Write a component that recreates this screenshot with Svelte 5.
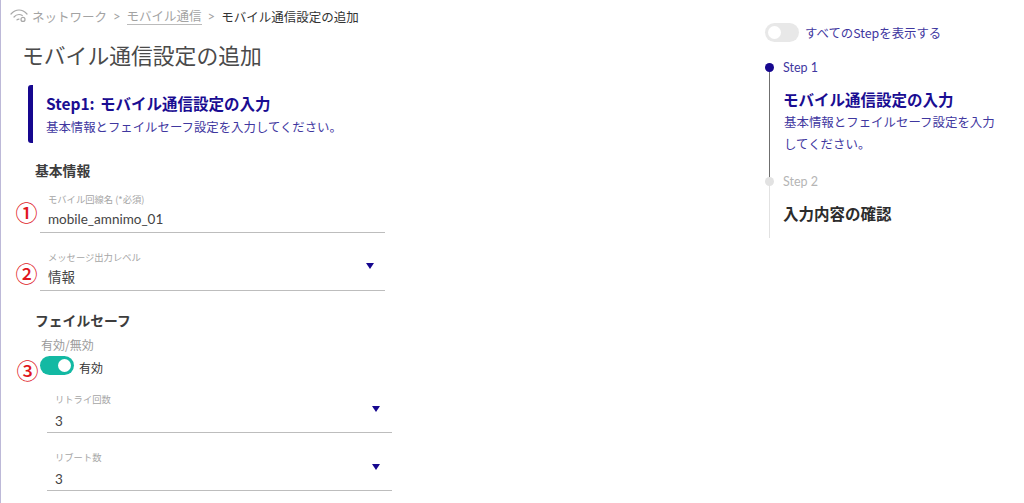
<script>
  const fields = [
    { label: "モバイル回線名 (*必須)", value: "mobile_amnimo_01", mark: "①" },
    { label: "メッセージ出力レベル", value: "情報", mark: "②", select: true }
  ];
  const subFields = [
    { label: "リトライ回数", value: "3", select: true },
    { label: "リブート数", value: "3", select: true }
  ];
</script>

{#snippet field(f)}
  <div class="field">
    {#if f.mark}<span class="mark">{f.mark}</span>{/if}
    <div class="field-label">{f.label}</div>
    <div class="field-value">{f.value}</div>
    {#if f.select}<span class="arrow"></span>{/if}
  </div>
{/snippet}

<div class="page">
  <main class="content">
    <nav class="crumbs">
      <svg class="wifi" width="18" height="14" viewBox="0 0 18 14" fill="none" stroke="#a8a8a8" stroke-width="1.2" stroke-linecap="round">
        <path d="M1 5C3.5 2.2 6 1 9 1s5.5 1.2 8 4" />
        <path d="M4 8C5.5 6.2 7 5.5 9 5.5c1.2 0 2.3.3 3.3 1" />
        <path d="M7 10.8c.6-.5 1.2-.7 2-.7" />
        <circle cx="13" cy="10.4" r="2" />
      </svg>
      <span class="crumb">ネットワーク</span>
      <span class="sep">&gt;</span>
      <span class="crumb link">モバイル通信</span>
      <span class="sep">&gt;</span>
      <span class="crumb current">モバイル通信設定の追加</span>
    </nav>

    <h1>モバイル通信設定の追加</h1>

    <section class="step-head">
      <h2>Step1: モバイル通信設定の入力</h2>
      <p>基本情報とフェイルセーフ設定を入力してください。</p>
    </section>

    <h3 class="basic">基本情報</h3>
    <div class="fields">
      {#each fields as f}
        {@render field(f)}
      {/each}
    </div>

    <h3 class="failsafe">フェイルセーフ</h3>
    <div class="enable">
      <div class="enable-label">有効/無効</div>
      <div class="enable-row">
        <span class="mark">③</span>
        <span class="toggle on"><span class="knob"></span></span>
        <span class="enable-text">有効</span>
      </div>
    </div>
    <div class="fields sub">
      {#each subFields as f}
        {@render field(f)}
      {/each}
    </div>
  </main>

  <aside class="side">
    <div class="show-all">
      <span class="toggle off"><span class="knob"></span></span>
      <span>すべてのStepを表示する</span>
    </div>
    <ol class="steps">
      <li class="step active">
        <div class="step-no">Step 1</div>
        <div class="step-title">モバイル通信設定の入力</div>
        <div class="step-desc">基本情報とフェイルセーフ設定を入力してください。</div>
      </li>
      <li class="step">
        <div class="step-no">Step 2</div>
        <div class="step-title">入力内容の確認</div>
      </li>
    </ol>
  </aside>
</div>

<style>
  :global(body) {
    margin: 0;
    background: #fff;
  }

  .page {
    display: flex;
    justify-content: space-between;
    width: 1024px;
    height: 503px;
    overflow: hidden;
    box-sizing: border-box;
    border-left: 1px solid #bdb9d8;
    font-family: "Noto Sans CJK JP", sans-serif;
    color: #333;
  }

  .content {
    width: 400px;
  }

  .crumbs {
    display: flex;
    align-items: center;
    height: 18px;
    margin: 7px 0 0 9px;
    font-size: 12.5px;
    color: #a3a3a3;
  }

  .wifi {
    margin-right: 4px;
  }

  .sep {
    margin: 0 6px;
    font-family: Lato, sans-serif;
    font-size: 13px;
  }

  .crumb.link {
    line-height: 17px;
    border-bottom: 1px solid #bbb;
  }

  .crumb.current {
    color: #333;
  }

  h1 {
    margin: 14px 0 0 21px;
    font-size: 21.8px;
    line-height: 32px;
    font-weight: 400;
    color: #4a4a4a;
  }

  .step-head {
    box-sizing: border-box;
    height: 58px;
    margin: 14px 0 0 27px;
    padding: 7px 0 0 13px;
    border-left: 5px solid #16078f;
    border-radius: 3px;
  }

  h2 {
    margin: 0;
    font-size: 15.5px;
    line-height: 22px;
    font-weight: 700;
    word-spacing: 2px;
    color: #1a0d92;
  }

  .step-head p {
    margin: 4px 0 0;
    font-size: 12.4px;
    line-height: 18px;
    color: #3f379f;
  }

  h3 {
    margin: 0;
    font-size: 13.8px;
    line-height: 20px;
    font-weight: 700;
    color: #3d3d3d;
  }

  .basic {
    margin: 17px 0 0 34px;
  }

  .fields {
    margin: 9px 0 0 39px;
    width: 345px;
  }

  .field {
    position: relative;
    box-sizing: border-box;
    height: 44px;
    padding: 0 0 0 8px;
    border-bottom: 1px solid #bdbdbd;
  }

  .field + .field {
    margin-top: 14px;
  }

  .field-label {
    padding-top: 3px;
    font-size: 9.3px;
    line-height: 14px;
    color: #a6a6a6;
  }

  .field-value {
    margin-top: 3px;
    font-family: Lato, "Noto Sans CJK JP", sans-serif;
    font-size: 13.5px;
    line-height: 20px;
    color: #444;
  }

  .arrow {
    position: absolute;
    right: 11px;
    top: 16px;
    width: 0;
    height: 0;
    border-left: 4px solid transparent;
    border-right: 4px solid transparent;
    border-top: 6px solid #16078f;
  }

  .mark {
    position: absolute;
    left: -25px;
    top: 7px;
    width: 23px;
    font-size: 22px;
    font-weight: 500;
    line-height: 30px;
    text-align: center;
    color: #e0161c;
  }

  .field + .field .mark {
    top: 10px;
  }

  .failsafe {
    margin: 19px 0 0 34px;
  }

  .enable {
    margin: 6px 0 0 39px;
  }

  .enable-label {
    padding-left: 1px;
    font-size: 12px;
    line-height: 18px;
    color: #9a9a9a;
  }

  .enable-row {
    position: relative;
    display: flex;
    align-items: center;
    height: 20px;
    margin-top: 1px;
  }

  .enable-row .mark {
    top: -1px;
    left: -24px;
  }

  .enable-text {
    margin: 4px 0 0 5px;
    font-size: 12px;
    color: #333;
  }

  .toggle {
    display: flex;
    align-items: center;
    box-sizing: border-box;
    width: 34px;
    height: 19px;
    padding: 0 3px;
    border-radius: 10px;
  }

  .toggle.on {
    justify-content: flex-end;
    background: #13b9a3;
  }

  .toggle.off {
    background: #e8e8e8;
  }

  .knob {
    width: 13px;
    height: 13px;
    border-radius: 50%;
    background: #fff;
  }

  .sub {
    margin: 15px 0 0 46px;
  }

  .sub .field {
    height: 43px;
    border-bottom-width: 1.5px;
  }

  .sub .field-label {
    padding-top: 2px;
  }

  .sub .field-value {
    margin-top: 5px;
  }

  .sub .field + .field {
    margin-top: 15px;
  }

  .sub .arrow {
    right: 12px;
  }

  .side {
    width: 259px;
  }

  .show-all {
    display: flex;
    align-items: center;
    gap: 6px;
    height: 19px;
    margin-top: 23px;
    font-size: 12.4px;
    color: #3f379f;
  }

  .steps {
    margin: 0;
    padding: 0;
    list-style: none;
  }

  .step {
    position: relative;
    display: flow-root;
    box-sizing: border-box;
    padding-left: 13px;
    border-left: 1px solid #e2e2e2;
    margin-left: 4px;
    height: 57px;
  }

  .step::before {
    content: "";
    position: absolute;
    left: -5px;
    top: -4px;
    width: 9px;
    height: 9px;
    border-radius: 50%;
    background: #e2e2e2;
  }

  .step.active {
    height: 114px;
    margin-top: 25px;
    border-left-color: #6f6f6f;
  }

  .step.active::before {
    background: #16078f;
  }

  .step-no {
    margin-top: -8px;
    font-family: Lato, sans-serif;
    font-size: 12.5px;
    line-height: 18px;
    color: #b5b5b5;
  }

  .active .step-no {
    color: #3f379f;
  }

  .step-title {
    margin-top: 11px;
    font-size: 15.5px;
    line-height: 22px;
    font-weight: 700;
    color: #2c2c2c;
  }

  .active .step-title {
    color: #1a0d92;
  }

  .step-desc {
    width: 216px;
    margin-top: 1px;
    padding-left: 1px;
    font-size: 12.45px;
    line-height: 22px;
    color: #3f379f;
  }
</style>
